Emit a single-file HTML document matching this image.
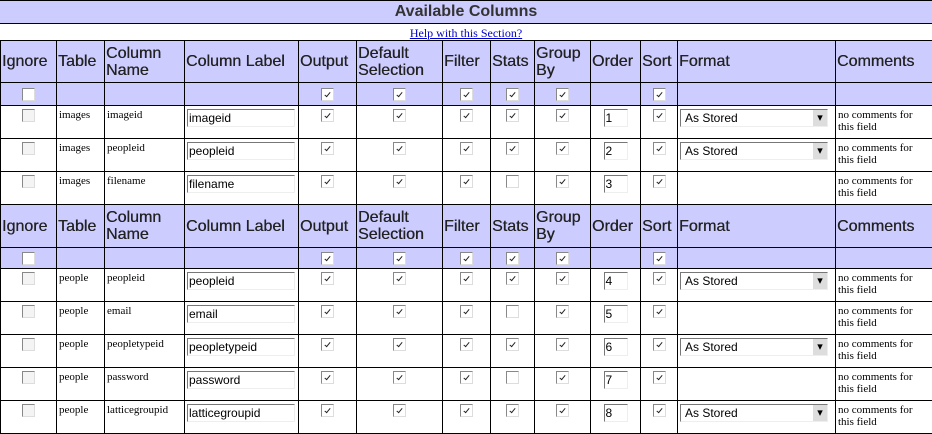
<!DOCTYPE html><html><head><style>
body{margin:0;background:#fff;width:932px;height:432px;overflow:hidden;font-family:"Liberation Serif",serif}
.title{height:22px;background:#ccf;border-top:1px solid #000;border-bottom:1px solid #000;text-align:center;font:bold 16px/22px "Liberation Sans",sans-serif;color:#333}
.help{height:16px;text-align:center;font-size:12px;line-height:18px}
.help a{color:#00c;text-decoration:underline}
table{border-collapse:collapse;table-layout:fixed;width:932px;position:absolute;top:40px;left:0}
td{border:1px solid #000;padding:0 2px;overflow:hidden;font-size:11px;vertical-align:middle}
tr.h td{background:#ccf;font:16px/17px "Liberation Sans",sans-serif;color:#222;padding:0 1px;text-shadow:0.3px 0 0 #222}
tr.c td{background:#ccf;text-align:center}
tr.d td{vertical-align:top;padding-top:3px}
.cb{display:inline-block;width:11px;height:11px;border:1px solid;border-color:#888 #ddd #ddd #888;background:#fff;position:relative;vertical-align:middle}
.cb.k:after{content:"";position:absolute;left:4px;top:2px;width:2px;height:5px;border:solid #222;border-width:0 1.5px 1.5px 0;transform:rotate(40deg)}
.cb.g{background:#f4f4f4}
.ce{text-align:center}
.in{display:inline-block;height:18px;border:1px solid;border-color:#777 #eee #eee #777;box-sizing:border-box;font:12px/17px "Liberation Sans",sans-serif;padding-left:1px;background:#fff;text-align:left}
.sel{display:inline-block;width:148px;height:18px;border:1px solid;border-color:#777 #eee #eee #777;box-sizing:border-box;font:12px/16px "Liberation Sans",sans-serif;padding-left:4px;position:relative;background:#fff}
.sel:after{content:"▾";position:absolute;right:0;top:0;width:14px;height:16px;background:#ddd;font-size:11px;text-align:center;line-height:16px}
</style></head><body>
<div class="title">Available Columns</div>
<div class="help"><a>Help with this Section?</a></div>
<table>
<colgroup><col style="width:56px"><col style="width:48px"><col style="width:80px"><col style="width:114px"><col style="width:58px"><col style="width:86px"><col style="width:48px"><col style="width:44px"><col style="width:56px"><col style="width:50px"><col style="width:37px"><col style="width:158px"><col style="width:97px"></colgroup>
<tr class="h" style="height:42px"><td>Ignore</td><td>Table</td><td>Column Name</td><td>Column Label</td><td>Output</td><td>Default Selection</td><td>Filter</td><td>Stats</td><td>Group By</td><td>Order</td><td>Sort</td><td>Format</td><td>Comments</td></tr>
<tr class="c" style="height:23px"><td><span class="cb"></span></td><td></td><td></td><td></td><td><span class="cb k"></span></td><td><span class="cb k"></span></td><td><span class="cb k"></span></td><td><span class="cb k"></span></td><td><span class="cb k"></span></td><td></td><td><span class="cb k"></span></td><td></td><td></td></tr>
<tr class="d" style="height:33px"><td class="ce"><span class="cb g"></span></td><td>images</td><td>imageid</td><td><span class="in" style="width:108px">imageid</span></td><td class="ce"><span class="cb k"></span></td><td class="ce"><span class="cb k"></span></td><td class="ce"><span class="cb k"></span></td><td class="ce"><span class="cb k"></span></td><td class="ce"><span class="cb k"></span></td><td class="ce"><span class="in" style="width:24px">1</span></td><td class="ce"><span class="cb k"></span></td><td><span class="sel">As Stored</span></td><td>no comments for this field</td></tr>
<tr class="d" style="height:33px"><td class="ce"><span class="cb g"></span></td><td>images</td><td>peopleid</td><td><span class="in" style="width:108px">peopleid</span></td><td class="ce"><span class="cb k"></span></td><td class="ce"><span class="cb k"></span></td><td class="ce"><span class="cb k"></span></td><td class="ce"><span class="cb k"></span></td><td class="ce"><span class="cb k"></span></td><td class="ce"><span class="in" style="width:24px">2</span></td><td class="ce"><span class="cb k"></span></td><td><span class="sel">As Stored</span></td><td>no comments for this field</td></tr>
<tr class="d" style="height:33px"><td class="ce"><span class="cb g"></span></td><td>images</td><td>filename</td><td><span class="in" style="width:108px">filename</span></td><td class="ce"><span class="cb k"></span></td><td class="ce"><span class="cb k"></span></td><td class="ce"><span class="cb k"></span></td><td class="ce"><span class="cb"></span></td><td class="ce"><span class="cb k"></span></td><td class="ce"><span class="in" style="width:24px">3</span></td><td class="ce"><span class="cb k"></span></td><td></td><td>no comments for this field</td></tr>
<tr class="h" style="height:43px"><td>Ignore</td><td>Table</td><td>Column Name</td><td>Column Label</td><td>Output</td><td>Default Selection</td><td>Filter</td><td>Stats</td><td>Group By</td><td>Order</td><td>Sort</td><td>Format</td><td>Comments</td></tr>
<tr class="c" style="height:21px"><td><span class="cb"></span></td><td></td><td></td><td></td><td><span class="cb k"></span></td><td><span class="cb k"></span></td><td><span class="cb k"></span></td><td><span class="cb k"></span></td><td><span class="cb k"></span></td><td></td><td><span class="cb k"></span></td><td></td><td></td></tr>
<tr class="d" style="height:33px"><td class="ce"><span class="cb g"></span></td><td>people</td><td>peopleid</td><td><span class="in" style="width:108px">peopleid</span></td><td class="ce"><span class="cb k"></span></td><td class="ce"><span class="cb k"></span></td><td class="ce"><span class="cb k"></span></td><td class="ce"><span class="cb k"></span></td><td class="ce"><span class="cb k"></span></td><td class="ce"><span class="in" style="width:24px">4</span></td><td class="ce"><span class="cb k"></span></td><td><span class="sel">As Stored</span></td><td>no comments for this field</td></tr>
<tr class="d" style="height:33px"><td class="ce"><span class="cb g"></span></td><td>people</td><td>email</td><td><span class="in" style="width:108px">email</span></td><td class="ce"><span class="cb k"></span></td><td class="ce"><span class="cb k"></span></td><td class="ce"><span class="cb k"></span></td><td class="ce"><span class="cb"></span></td><td class="ce"><span class="cb k"></span></td><td class="ce"><span class="in" style="width:24px">5</span></td><td class="ce"><span class="cb k"></span></td><td></td><td>no comments for this field</td></tr>
<tr class="d" style="height:33px"><td class="ce"><span class="cb g"></span></td><td>people</td><td>peopletypeid</td><td><span class="in" style="width:108px">peopletypeid</span></td><td class="ce"><span class="cb k"></span></td><td class="ce"><span class="cb k"></span></td><td class="ce"><span class="cb k"></span></td><td class="ce"><span class="cb k"></span></td><td class="ce"><span class="cb k"></span></td><td class="ce"><span class="in" style="width:24px">6</span></td><td class="ce"><span class="cb k"></span></td><td><span class="sel">As Stored</span></td><td>no comments for this field</td></tr>
<tr class="d" style="height:33px"><td class="ce"><span class="cb g"></span></td><td>people</td><td>password</td><td><span class="in" style="width:108px">password</span></td><td class="ce"><span class="cb k"></span></td><td class="ce"><span class="cb k"></span></td><td class="ce"><span class="cb k"></span></td><td class="ce"><span class="cb"></span></td><td class="ce"><span class="cb k"></span></td><td class="ce"><span class="in" style="width:24px">7</span></td><td class="ce"><span class="cb k"></span></td><td></td><td>no comments for this field</td></tr>
<tr class="d" style="height:33px"><td class="ce"><span class="cb g"></span></td><td>people</td><td>latticegroupid</td><td><span class="in" style="width:108px">latticegroupid</span></td><td class="ce"><span class="cb k"></span></td><td class="ce"><span class="cb k"></span></td><td class="ce"><span class="cb k"></span></td><td class="ce"><span class="cb k"></span></td><td class="ce"><span class="cb k"></span></td><td class="ce"><span class="in" style="width:24px">8</span></td><td class="ce"><span class="cb k"></span></td><td><span class="sel">As Stored</span></td><td>no comments for this field</td></tr>
</table>
</body></html>
